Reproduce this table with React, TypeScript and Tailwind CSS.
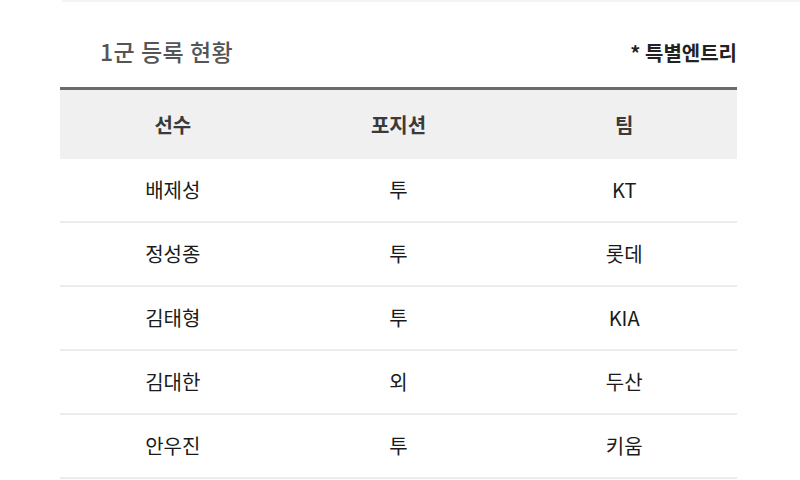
import React from "react";

const rows = [
  ["배제성", "투", "KT"],
  ["정성종", "투", "롯데"],
  ["김태형", "투", "KIA"],
  ["김대한", "외", "두산"],
  ["안우진", "투", "키움"],
];

export default function App() {
  return (
    <div
      className="w-[800px] h-[480px] bg-white overflow-hidden"
      style={{ fontFamily: '"Noto Sans CJK KR", "Noto Sans", sans-serif' }}
    >
      <div className="h-[2px] ml-[62px] bg-[#f4f4f4]" />
      <div className="ml-[60px] w-[677px]">
        <div className="flex items-end justify-between h-[85px] pb-[24px]">
          <div className="pl-[40px] text-[23px] leading-none text-[#555] font-medium tracking-[0.5px]">
            1군 등록 현황
          </div>
          <div className="text-[20px] leading-none text-[#222] font-bold">
            * 특별엔트리
          </div>
        </div>
        <div className="border-t-[3px] border-[#6b6b6b]">
          <div className="grid grid-cols-3 h-[69px] items-center bg-[#f0f0f0] text-[20px] font-bold text-[#3a3a3a]">
            <div className="text-center">선수</div>
            <div className="text-center">포지션</div>
            <div className="text-center">팀</div>
          </div>
          {rows.map((r, i) => (
            <div
              key={i}
              className="grid grid-cols-3 h-[64px] items-center border-b-2 border-[#ececec] text-[20px] text-[#1a1a1a]"
            >
              {r.map((c, j) => (
                <div key={j} className="text-center">
                  {c}
                </div>
              ))}
            </div>
          ))}
        </div>
      </div>
    </div>
  );
}
